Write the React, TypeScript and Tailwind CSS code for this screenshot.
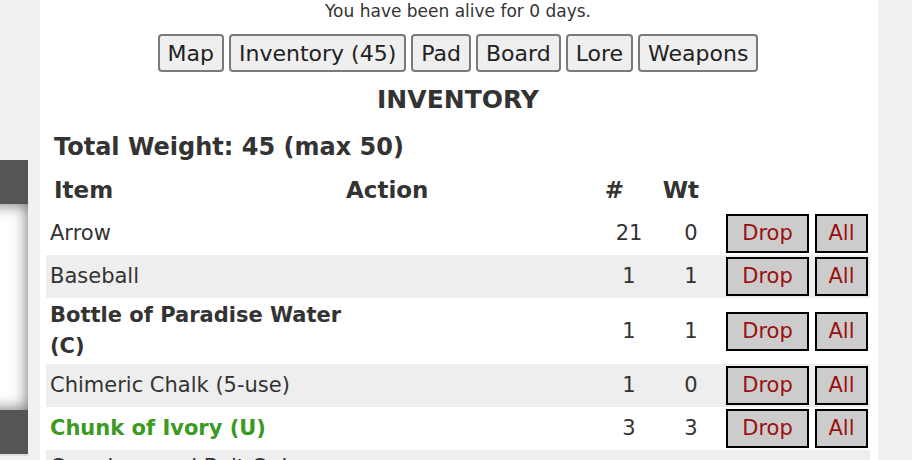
import React from 'react'

type Item = {
    name: string
    count: number
    weight: number
    style?: 'bold' | 'unique'
}

const items: Item[] = [
    { name: 'Arrow', count: 21, weight: 0 },
    { name: 'Baseball', count: 1, weight: 1 },
    { name: 'Bottle of Paradise Water (C)', count: 1, weight: 1, style: 'bold' },
    { name: 'Chimeric Chalk (5-use)', count: 1, weight: 0 },
    { name: 'Chunk of Ivory (U)', count: 3, weight: 3, style: 'unique' },
    { name: 'Crossbow and Bolt Quiver (U)', count: 1, weight: 4 },
]

const tabs = ['Map', 'Inventory (45)', 'Pad', 'Board', 'Lore', 'Weapons']

const font = { fontFamily: '"DejaVu Sans", Verdana, sans-serif' }

function ItemRow({ item, shaded }: { item: Item; shaded: boolean }) {
    const nameClass =
        item.style === 'bold'
            ? 'font-bold text-[#333]'
            : item.style === 'unique'
              ? 'font-bold text-[#3a9a22]'
              : 'text-[#333]'
    return (
        <div
            className={`grid grid-cols-[300px_244px_56px_56px_168px] items-center py-[2px] text-[21px] leading-[31px] ${
                shaded ? 'bg-[#eeeeee]' : 'bg-white'
            }`}
        >
            <div className={`pl-1 ${nameClass}`}>{item.name}</div>
            <div></div>
            <div className="pl-[22px] text-center text-[#333]">{item.count}</div>
            <div className="pl-[34px] text-center text-[#333]">{item.weight}</div>
            <div className="flex justify-end gap-[6px] pr-[2px]">
                <button className="h-[39px] w-[83px] border-2 border-black bg-[#cccccc] text-[21px] text-[#9a1010]">
                    Drop
                </button>
                <button className="h-[39px] w-[53px] border-2 border-black bg-[#cccccc] text-[21px] text-[#9a1010]">
                    All
                </button>
            </div>
        </div>
    )
}

export default function App() {
    return (
        <div className="flex h-[460px] w-[912px] overflow-hidden bg-[#f1f1f1]" style={font}>
            {/* side panel peeking in from the left */}
            <div className="w-[40px] shrink-0 overflow-hidden">
                <div className="mt-[160px] -ml-[32px] w-[60px]">
                    <div className="h-[44px] bg-[#555555]"></div>
                    <div className="h-[206px] bg-white shadow-[inset_0_0_16px_rgba(0,0,0,0.6)]"></div>
                    <div className="h-[44px] bg-[#555555]"></div>
                    <div className="h-[2px] bg-[#dddddd]"></div>
                </div>
            </div>

            <div className="w-[838px] shrink-0 bg-white pl-[6px] pr-[8px]">
                <p className="text-center text-[17px] leading-[23px] text-[#333]">You have been alive for 0 days.</p>

                <div className="mt-[11px] flex justify-center gap-[5px]">
                    {tabs.map((t) => (
                        <button
                            key={t}
                            className="h-[38px] rounded-[4px] border-2 border-[#7a7a7a] bg-[#efefef] px-[8px] text-[22px] text-[#222]"
                        >
                            {t}
                        </button>
                    ))}
                </div>

                <h2 className="mt-[13px] text-center text-[25px] font-bold leading-[30px] text-[#333]">INVENTORY</h2>

                <div className="mt-[17px] pl-2 text-[24px] font-bold leading-[30px] text-[#333]">
                    Total Weight: 45 (max 50)
                </div>

                <div className="mt-[13px] grid h-[37px] grid-cols-[300px_244px_56px_56px_168px] items-start text-[23px] font-bold leading-[30px] text-[#333]">
                    <div className="pl-2">Item</div>
                    <div>Action</div>
                    <div className="pr-[22px] text-right">#</div>
                    <div className="pr-[3px] text-right">Wt</div>
                    <div></div>
                </div>

                {items.map((item, i) => (
                    <ItemRow key={item.name} item={item} shaded={i % 2 === 1} />
                ))}
            </div>
        </div>
    )
}
